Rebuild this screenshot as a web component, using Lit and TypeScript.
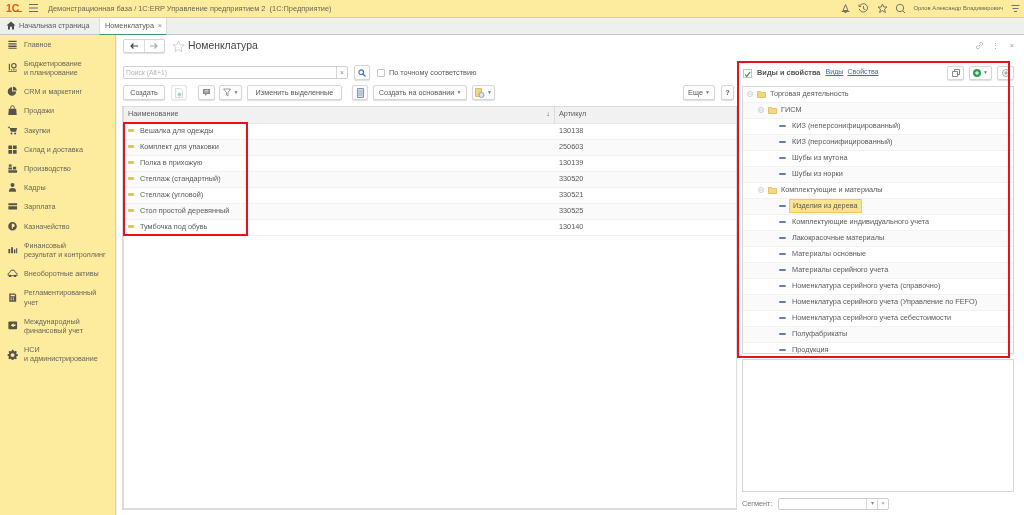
import {html, css, svg, LitElement} from 'lit';
import {customElement} from 'lit/decorators.js';

const NAV_ICONS: Record<string, any> = {
  main: svg`<path d="M1 2h9v1.4H1zM1 4.600h9V6H1zM1 7.200h9v1.400H1zM1 9.600h9v1H1z"/>`,
  budget: svg`<path d="M1 10h9v1H1zM1.500 2h1.200v7H1.500z"/><circle cx="7" cy="4" r="2.400" fill="none" stroke="currentColor" stroke-width="1.200"/><path d="M4 8h1.200v1.400H4zM6.400 7.500h1.200v1.900H6.400zM8.800 8h1.200v1.400H8.800z"/>`,
  pie: svg`<path d="M5 1.500v4.500h4.500A4.600 4.600 0 1 1 5 1.500z"/><path d="M6 .8a4.600 4.600 0 0 1 4.200 4.200H6z"/>`,
  bag: svg`<path d="M1.500 4h8l.6 7H.9z"/><path d="M3.600 4V2.600a1.900 1.900 0 0 1 3.800 0V4" fill="none" stroke="currentColor"/>`,
  cart: svg`<path d="M.5 2h2l.4 1.200h7.600L9.400 7.400H3.800L2.200 3H.5z"/><circle cx="4.400" cy="9.200" r="1.100"/><circle cx="8.400" cy="9.200" r="1.100"/>`,
  store: svg`<path d="M1 1.500h4v4H1zM6 1.500h4v4H6zM1 6.500h4v4H1zM6 6.500h4v4H6z"/>`,
  factory: svg`<path d="M1.500 1.500h3v2.600h-3zM1 5h4v2H1zM6 4h3.500v3H6zM1 8h9.500v2.600H1z"/>`,
  person: svg`<circle cx="5.500" cy="3.200" r="2.200"/><path d="M1.500 10.500c0-2.800 1.600-4 4-4s4 1.200 4 4z"/>`,
  card: svg`<path d="M1 2.500h9.500v2H1zM1 5.600h9.500v3.600H1z"/>`,
  coin: svg`<path fill-rule="evenodd" d="M5.500 1a4.700 4.700 0 1 1 0 9.400 4.700 4.700 0 0 1 0-9.400zM4.700 3v5.400h1.200V6.600c1.300 0 2-.7 2-1.800S7.200 3 5.900 3z"/>`,
  bars: svg`<path d="M1 5.500h2V10H1zM4 3.500h2V10H4zM7 6h1.600v4H7zM9.400 4.500h1.200V10H9.400z"/>`,
  car: svg`<path d="M2.500 5l1.400-2.600h3.400L8.800 5l1.700 1v2.400H.8V6z" fill="none" stroke="currentColor"/><circle cx="3" cy="8.600" r="1.300"/><circle cx="8.200" cy="8.600" r="1.300"/>`,
  calc: svg`<path fill-rule="evenodd" d="M2 1.500h6l1.500 1.500v7.500H2zM3.400 3v1.600h4.600V3zM3.400 6v1h1.400V6zM5.800 6v1h1.400V6zM3.400 8v1h1.400V8zM5.800 8v1h1.400V8z"/>`,
  exit: svg`<path fill-rule="evenodd" d="M2 1.500h7.500a1 1 0 0 1 1 1v6.500a1 1 0 0 1-1 1H2a1 1 0 0 1-1-1V2.500a1 1 0 0 1 1-1zM6.800 3.500L3.500 5.700l3.300 2.200V6.500h2V5H6.800z"/>`,
  gear: svg`<path fill-rule="evenodd" d="M4.700 .8h1.800l.3 1.500 1 .4 1.300-.8 1.200 1.300-.8 1.200.4 1 1.400.3v1.800l-1.400.3-.4 1 .8 1.300-1.200 1.200-1.300-.8-1 .4-.3 1.400H4.700l-.3-1.400-1-.4-1.300.8-1.200-1.200.8-1.300-.4-1L.2 7.500V5.700l1.400-.3.4-1-.8-1.200L2.400 1.900l1.300.8 1-.4zM5.600 4.500a2.100 2.100 0 1 0 0 4.200 2.100 2.100 0 0 0 0-4.200z"/>`,
};

const NAV = [
  {icon: 'main', lines: ['Главное']},
  {icon: 'budget', lines: ['Бюджетирование', 'и планирование']},
  {icon: 'pie', lines: ['CRM и маркетинг']},
  {icon: 'bag', lines: ['Продажи']},
  {icon: 'cart', lines: ['Закупки']},
  {icon: 'store', lines: ['Склад и доставка']},
  {icon: 'factory', lines: ['Производство']},
  {icon: 'person', lines: ['Кадры']},
  {icon: 'card', lines: ['Зарплата']},
  {icon: 'coin', lines: ['Казначейство']},
  {icon: 'bars', lines: ['Финансовый', 'результат и контроллинг']},
  {icon: 'car', lines: ['Внеоборотные активы']},
  {icon: 'calc', lines: ['Регламентированный', 'учет']},
  {icon: 'exit', lines: ['Международный', 'финансовый учет']},
  {icon: 'gear', lines: ['НСИ', 'и администрирование']},
];

const GOODS = [
  ['Вешалка для одежды', '130138'],
  ['Комплект для упаковки', '250603'],
  ['Полка в прихожую', '130139'],
  ['Стеллаж (стандартный)', '330520'],
  ['Стеллаж (угловой)', '330521'],
  ['Стол простой деревянный', '330525'],
  ['Тумбочка под обувь', '130140'],
];

const TREE = [
  {lvl: 0, text: 'Торговая деятельность'},
  {lvl: 1, text: 'ГИСМ'},
  {lvl: 2, text: 'КИЗ (неперсонифицированный)'},
  {lvl: 2, text: 'КИЗ (персонифицированный)'},
  {lvl: 2, text: 'Шубы из мутона'},
  {lvl: 2, text: 'Шубы из норки'},
  {lvl: 1, text: 'Комплектующие и материалы'},
  {lvl: 2, text: 'Изделия из дерева', sel: true},
  {lvl: 2, text: 'Комплектующие индивидуального учета'},
  {lvl: 2, text: 'Лакокрасочные материалы'},
  {lvl: 2, text: 'Материалы основные'},
  {lvl: 2, text: 'Материалы серийного учета'},
  {lvl: 2, text: 'Номенклатура серийного учета (справочно)'},
  {lvl: 2, text: 'Номенклатура серийного учета (Управление по FEFO)'},
  {lvl: 2, text: 'Номенклатура серийного учета себестоимости'},
  {lvl: 2, text: 'Полуфабрикаты'},
  {lvl: 2, text: 'Продукция'},
];

const burger = html`<svg width="9" height="8" viewBox="0 0 9 8" fill="none" stroke="#6f6b60"><path d="M0 .5h9M0 4h9M0 7.500h9"/></svg>`;

const folder = html`<svg class="folder" width="9" height="8" viewBox="0 0 9 8"><path d="M.5 1.500h3l1 1h4v5h-8z" fill="#f6d77e" stroke="#d8b04e" stroke-width=".7"/></svg>`;

const toggle = html`<svg class="toggle" width="6" height="6" viewBox="0 0 6 6" fill="none" stroke="#b9b9b9" stroke-width=".7"><circle cx="3" cy="3" r="2.500"/><path d="M1.500 3h3"/></svg>`;

@customElement('app-root')
export class AppRoot extends LitElement {
  static styles = css`
    :host {
      display: flex;
      flex-direction: column;
      width: 1024px;
      height: 515px;
      overflow: hidden;
      background: #fff;
      color: #5b5b5b;
      font: 7.300px/9.200px "Liberation Sans", Arial, sans-serif;
      filter: blur(.3px);
    }
    * { box-sizing: border-box; }
    button { font: inherit; color: inherit; padding: 0; }

    /* top yellow strip */
    .topbar {
      display: flex;
      align-items: center;
      height: 17.500px;
      flex: none;
      padding: 0 4px 0 6px;
      background: #fdeb9e;
      border-bottom: 1px solid #e5cf80;
    }
    .logo { position: relative; width: 21px; font: bold 10.500px/12px "Liberation Sans", sans-serif; color: #e8571f; }
    .logo::after { content: ""; position: absolute; left: 8px; right: 5px; bottom: 2px; height: 1px; background: #e8571f; }
    .burger { display: flex; margin: 0 10px 0 2px; }
    .app-title { flex: 1; font-size: 7.400px; color: #6b6753; }
    .top-ic { display: flex; align-items: center; gap: 7.500px; margin-right: 7px; }
    .user { font-size: 5.800px; color: #6b6753; margin-right: 8px; }

    /* tabs */
    .tabs {
      display: flex;
      height: 17px;
      flex: none;
      background: #eef0ef;
      border-bottom: 1px solid #c5c5c5;
    }
    .home { display: flex; align-items: center; gap: 3px; width: 99px; padding-left: 6px; }
    .tab {
      display: flex;
      align-items: center;
      justify-content: space-between;
      width: 68px;
      height: 17px;
      padding: 0 4px 0 5px;
      background: #fff;
      border: solid #dcdcdc;
      border-width: 0 1px;
      border-bottom: 1px solid #3b9a6c;
    }
    .tab i { font-style: normal; color: #888; }

    .body { flex: 1; display: flex; min-height: 0; }

    .side {
      width: 116px;
      flex: none;
      background: #fdeb9e;
      border-right: 1px solid #e3d08a;
      box-shadow: 1px 0 0 #efefef;
    }
    .nav-item { display: flex; align-items: center; padding: 5px 0 5px 7px; gap: 6px; }
    .nav-item svg { flex: none; margin: -2px 0; color: #55544c; fill: currentColor; }
    .nav-item span { display: block; font-size: 7.200px; color: #6a675a; white-space: nowrap; }

    .main {
      flex: 1;
      min-width: 0;
      display: flex;
      flex-direction: column;
      padding: 4px 10px 5px 6px;
    }
    .head { display: flex; align-items: center; height: 15px; flex: none; }
    .nav-btns { display: flex; width: 42px; height: 14px; margin-left: 1px; border: 1px solid #d4d4d4; border-radius: 2px; box-shadow: 0 1px 1px rgba(0,0,0,.12); }
    .nav-btns div { flex: 1; display: flex; align-items: center; justify-content: center; }
    .nav-btns div + div { border-left: 1px solid #ddd; }
    .fav { margin: 0 3px 0 7px; }
    h1 { flex: 1; margin: 0; font-size: 10.400px; line-height: 14px; font-weight: 400; color: #444; }
    .head-r { display: flex; align-items: center; gap: 11px; color: #999; }
    .head-r svg { margin-right: -3px; }

    .cols { flex: 1; min-height: 0; display: flex; margin-top: 12px; }
    .left { width: 615px; flex: none; display: flex; flex-direction: column; }

    .search { display: flex; align-items: center; height: 14px; margin-left: 1px; flex: none; }
    .input { display: flex; align-items: center; justify-content: space-between; width: 225px; height: 13px; border: 1px solid #cfcfcf; border-radius: 2px; padding-left: 2px; color: #b5b5b5; font-size: 6.800px; }
    .input b { display: flex; align-items: center; justify-content: center; width: 11px; height: 11px; border-left: 1px solid #d8d8d8; color: #888; font-weight: 400; }
    .icon-btn {
      display: inline-flex;
      align-items: center;
      justify-content: center;
      gap: 2px;
      height: 15px;
      background: #fdfdfd;
      border: 1px solid #d6d6d6;
      border-radius: 2px;
      box-shadow: 0 1px 1px rgba(0,0,0,.13);
      white-space: nowrap;
    }
    .search .icon-btn { width: 16px; margin-left: 6px; }
    .check { width: 8px; height: 8px; margin: 0 4px 0 7px; border: 1px solid #c4c4c4; border-radius: 1px; background: #fff; }

    .tools { display: flex; align-items: center; height: 16px; margin: 5px 0 5px 1px; flex: none; }
    .tools .spacer { flex: 1; }
    .caret { font-size: 5px; color: #777; }

    .table { position: relative; flex: 1; min-height: 0; border: solid #dcdcdc; border-width: 1px 1px 2px 2px; }
    .t-row { display: grid; grid-template-columns: 431px 1fr; height: 16px; align-items: center; border-bottom: 1px solid #f2f2f2; }
    .t-row:nth-child(odd) { background: #fafafa; }
    .t-row.th { height: 17px; background: #f1f1f1; border-bottom: 1px solid #e6e6e6; }
    .t-row.th > div { display: flex; justify-content: space-between; height: 100%; align-items: center; padding: 0 4px 1px; }
    .t-row.th > div:first-child { border-right: 1px solid #dcdcdc; }
    .cell { display: flex; align-items: center; gap: 6px; padding-left: 4px; }
    .cell i { width: 6px; height: 3px; background: #e4c25c; border-radius: 1px; }
    .num { padding-left: 4px; }
    .mark { position: absolute; border: 2.500px solid #e8101c; pointer-events: none; }
    .mark.goods { left: -1px; top: 15px; width: 125px; height: 114px; }

    .right { position: relative; flex: 1; min-width: 0; display: flex; flex-direction: column; margin-left: 5px; }
    .r-head { display: flex; align-items: center; height: 15px; flex: none; }
    .r-check { width: 9px; height: 9px; margin: 0 5px 0 1px; border: 1px solid #c4c4c4; background: #fff; display: flex; }
    .r-head b { font-weight: 700; font-size: 7.400px; margin-right: 5px; color: #555; }
    .r-head a { font-size: 7.100px; color: #3b6cb5; text-decoration: underline; margin-right: 4px; }
    .r-head .spacer { flex: 1; }
    .r-head .icon-btn { margin-left: 5px; height: 14px; }
    .tree { height: 268px; margin-top: 5px; overflow: hidden; border: 1px solid #d6d6d6; flex: none; }
    .node { display: flex; align-items: center; height: 16px; border-bottom: 1px solid #f2f2f2; white-space: nowrap; }
    .node:nth-child(even) { background: #fafafa; }
    .lvl0 { padding-left: 4px; }
    .lvl1 { padding-left: 15px; }
    .lvl2 { padding-left: 36px; }
    .toggle { margin-right: 4px; }
    .folder { margin-right: 4px; }
    .dash { width: 7px; height: 2.500px; margin-right: 6px; background: #5d83a8; border-radius: 1px; }
    .sel { margin-left: -3px; padding: 0 3px; height: 14px; line-height: 12px; background: #fbe38f; border: 1px solid #f1cb55; }
    .mark.tree-mark { left: -5px; top: -5px; width: 272.500px; height: 297.500px; }
    .notes { flex: 1; min-height: 0; margin-top: 5px; border: 1px solid #d6d6d6; }
    .segment { display: flex; align-items: center; height: 13px; margin-top: 5px; flex: none; }
    .segment label { width: 36px; color: #777; }
    .seg-input { display: flex; width: 111px; height: 12px; border: 1px solid #cfcfcf; border-radius: 2px; }
    .seg-input div:first-child { flex: 1; }
    .seg-input div + div { display: flex; align-items: center; justify-content: center; width: 11px; border-left: 1px solid #d8d8d8; color: #888; font-size: 6px; }
  `;

  private topIcons() {
    return html`<div class="top-ic">
      <svg width="11" height="11" viewBox="0 0 11 11" fill="none" stroke="#77736a"><path d="M5.500 1.500L8 7.500H3zM1.500 8.500h8"/><path d="M4.500 9.500h2"/></svg>
      <svg width="11" height="11" viewBox="0 0 11 11" fill="none" stroke="#77736a"><path d="M1.500 3.200A4.200 4.200 0 1 1 1.300 6M5.500 3v2.800l2 1M1 1.500v2h2"/></svg>
      <svg width="11" height="11" viewBox="0 0 11 11" fill="none" stroke="#77736a"><path d="M5.500 1l1.300 3h3.200L7.500 6.200l.9 3.300-2.900-1.900-2.900 1.900.9-3.300L1 4h3.200z"/></svg>
      <svg width="11" height="11" viewBox="0 0 11 11" fill="none" stroke="#77736a"><circle cx="5" cy="5" r="3.700"/><path d="M7.700 7.700L10 10"/></svg>
    </div>`;
  }

  render() {
    return html`
      <div class="topbar">
        <div class="logo">1С</div>
        <div class="burger">${burger}</div>
        <div class="app-title">Демонстрационная база / 1С:ERP Управление предприятием 2&nbsp;&nbsp;(1С:Предприятие)</div>
        ${this.topIcons()}
        <div class="user">Орлов Александр Владимирович</div>
        <svg width="9" height="9" viewBox="0 0 9 9" fill="none" stroke="#77736a"><path d="M.5 1.500h8M1.500 4.500h6M3 7.500h3"/></svg>
      </div>

      <div class="tabs">
        <div class="home">
          <svg width="10" height="9" viewBox="0 0 10 9" fill="#4d4d4d"><path d="M5 .5L9.500 4.600H8V8.500H6V5.800H4V8.500H2V4.600H.5z"/></svg>
          Начальная страница
        </div>
        <div class="tab">Номенклатура <i>×</i></div>
      </div>

      <div class="body">
        <div class="side">
          ${NAV.map(n => html`<div class="nav-item">
            <svg width="11" height="11" viewBox="0 0 11 12">${NAV_ICONS[n.icon]}</svg>
            <div>${n.lines.map(l => html`<span>${l}</span>`)}</div>
          </div>`)}
        </div>

        <div class="main">
          <div class="head">
            <div class="nav-btns">
              <div><svg width="8" height="6" viewBox="0 0 8 6" fill="none" stroke="#444" stroke-width="1.200"><path d="M8 3H1M3.500 .5L1 3l2.500 2.500"/></svg></div>
              <div><svg width="8" height="6" viewBox="0 0 8 6" fill="none" stroke="#aaa" stroke-width="1.200"><path d="M0 3h7M4.500 .5L7 3 4.500 5.500"/></svg></div>
            </div>
            <svg class="fav" width="13" height="13" viewBox="0 0 13 13" fill="none" stroke="#d2d2d2"><path d="M6.500 1l1.600 3.700 4 .3-3 2.600.9 4-3.500-2.100-3.500 2.100.9-4-3-2.600 4-.3z"/></svg>
            <h1>Номенклатура</h1>
            <div class="head-r">
              <svg width="9" height="9" viewBox="0 0 9 9" fill="none" stroke="#a5a5a5"><path d="M3.500 5.500l2-2M4.500 2.500l1-1a1.500 1.500 0 0 1 2 2l-1 1M4.500 6.500l-1 1a1.500 1.500 0 0 1-2-2l1-1"/></svg>
              <span>⋮</span>
              <span>×</span>
            </div>
          </div>

          <div class="cols">
            <div class="left">
              <div class="search">
                <div class="input">Поиск (Alt+1)<b>×</b></div>
                <button class="icon-btn"><svg width="8" height="8" viewBox="0 0 8 8" fill="none" stroke="#3f78b5" stroke-width="1.200"><circle cx="3.200" cy="3.200" r="2.300"/><path d="M5 5l2.500 2.500"/></svg></button>
                <div class="check"></div>
                По точному соответствию
              </div>

              <div class="tools">
                <button class="icon-btn" style="width:42px">Создать</button>
                <button class="icon-btn" style="width:16px;margin-left:6px;opacity:.6"><svg width="8" height="10" viewBox="0 0 8 10"><path d="M.5.500h5l2 2v7h-7z" fill="#fff" stroke="#c4c4c4"/><circle cx="4.500" cy="6.500" r="2" fill="#7bbf8b"/></svg></button>
                <button class="icon-btn" style="width:17px;margin-left:11px"><svg width="9" height="9" viewBox="0 0 9 9"><path d="M1 1h7v5H5L3 8V6H1z" fill="#8a8a8a"/><path d="M2.500 2.500h4M2.500 4h4" stroke="#eee" stroke-width=".7"/></svg></button>
                <button class="icon-btn" style="width:23px;margin-left:4px"><svg width="9" height="9" viewBox="0 0 9 9" fill="none" stroke="#9a9a9a"><path d="M.5 1h7L5 4.500V8L3.500 7V4.500z"/></svg><span class="caret">▼</span></button>
                <button class="icon-btn" style="width:95px;margin-left:5px">Изменить выделенные</button>
                <button class="icon-btn" style="width:16px;margin-left:10px"><svg width="7" height="10" viewBox="0 0 7 10"><path d="M.5.500h6v9h-6z" fill="#d5deea" stroke="#7f97b5"/><path d="M1.500 3h4M1.500 5h4M1.500 7h4" stroke="#7f97b5" stroke-width=".7"/></svg></button>
                <button class="icon-btn" style="width:94px;margin-left:5px">Создать на основании <span class="caret">▼</span></button>
                <button class="icon-btn" style="width:23px;margin-left:5px"><svg width="10" height="10" viewBox="0 0 10 10"><path d="M.5.500h6v8h-6z" fill="#f0d47f" stroke="#c9a94f" stroke-width=".7"/><circle cx="6.500" cy="7" r="2.500" fill="#dfe7ef" stroke="#6a8bb0" stroke-width=".7"/></svg><span class="caret">▼</span></button>
                <div class="spacer"></div>
                <button class="icon-btn" style="width:32px">Еще <span class="caret">▼</span></button>
                <button class="icon-btn" style="width:13px;margin:0 3px 0 6px;font-weight:700">?</button>
              </div>

              <div class="table">
                <div class="t-row th"><div>Наименование <span>↓</span></div><div>Артикул</div></div>
                ${GOODS.map(g => html`<div class="t-row">
                  <div class="cell"><i></i>${g[0]}</div><div class="num">${g[1]}</div>
                </div>`)}
                <div class="mark goods"></div>
              </div>
            </div>

            <div class="right">
              <div class="r-head">
                <div class="r-check"><svg width="9" height="9" viewBox="0 0 9 9" fill="none" stroke="#2e9a4f" stroke-width="1.500"><path d="M1.500 4.500l2 2.500L8 1"/></svg></div>
                <b>Виды и свойства</b>
                <a>Виды</a><a>Свойства</a>
                <div class="spacer"></div>
                <button class="icon-btn" style="width:17px"><svg width="8" height="8" viewBox="0 0 8 8" fill="none" stroke="#888"><path d="M.5 2.500h5v5h-5zM2.500 2.500v-2h5v5h-2"/></svg></button>
                <button class="icon-btn" style="width:23px"><svg width="8" height="8" viewBox="0 0 8 8"><circle cx="4" cy="4" r="4" fill="#2fa24f"/><path d="M2 4h4M4 2v4" stroke="#fff"/></svg><span class="caret">▼</span></button>
                <button class="icon-btn" style="width:17px"><svg width="8" height="8" viewBox="0 0 8 8" fill="none" stroke="#aaa"><circle cx="4" cy="4" r="3.500"/><circle cx="4" cy="4" r="1.200" fill="#bbb"/></svg></button>
              </div>
              <div class="tree">
                ${TREE.map(t => html`<div class="node lvl${t.lvl}">
                  ${t.lvl < 2 ? html`${toggle}${folder}` : html`<i class="dash"></i>`}
                  ${t.sel ? html`<span class="sel">${t.text}</span>` : t.text}
                </div>`)}
              </div>
              <div class="notes"></div>
              <div class="segment">
                <label>Сегмент:</label>
                <div class="seg-input"><div></div><div>▾</div><div>×</div></div>
              </div>
              <div class="mark tree-mark"></div>
            </div>
          </div>
        </div>
      </div>
    `;
  }
}
